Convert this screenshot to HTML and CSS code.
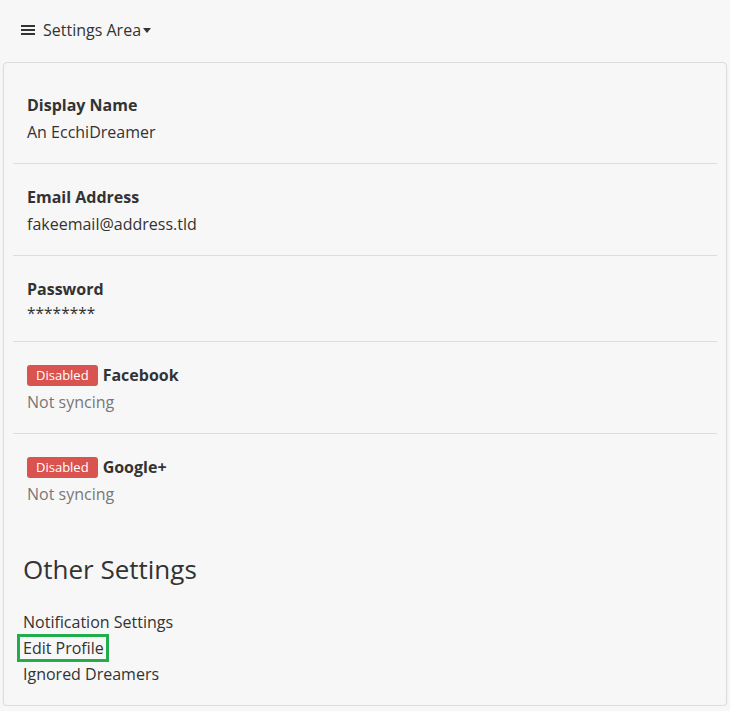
FILE: index.html
```html
<!DOCTYPE html>
<html lang="en">
<head>
  <meta charset="UTF-8">
  <title>Settings Area</title>
  <meta name="viewport" content="width=device-width, initial-scale=1.0">
  <link rel="stylesheet" href="styles.css">
</head>
<body>
  <div class="topbar">
    <a class="menu-toggle" href="#">
      <svg class="burger" width="14" height="10" viewBox="0 0 14 10">
        <rect x="0" y="0" width="14" height="2"/>
        <rect x="0" y="4" width="14" height="2"/>
        <rect x="0" y="8" width="14" height="2"/>
      </svg>
      Settings Area<span class="caret"></span>
    </a>
  </div>

  <div class="panel">
    <ul class="setting-list">
      <li class="setting-item">
        <div class="setting-name">Display Name</div>
        <div class="setting-value">An EcchiDreamer</div>
      </li>
      <li class="setting-item">
        <div class="setting-name">Email Address</div>
        <div class="setting-value">fakeemail@address.tld</div>
      </li>
      <li class="setting-item">
        <div class="setting-name">Password</div>
        <div class="setting-value secret">********</div>
      </li>
      <li class="setting-item">
        <div class="setting-name"><span class="label-danger">Disabled</span> Facebook</div>
        <div class="setting-value muted">Not syncing</div>
      </li>
      <li class="setting-item">
        <div class="setting-name"><span class="label-danger">Disabled</span> Google+</div>
        <div class="setting-value muted">Not syncing</div>
      </li>
    </ul>

    <div class="other-settings">
      <h3>Other Settings</h3>
      <ul class="link-list">
        <li><a href="#">Notification Settings</a></li>
        <li><a href="#" class="highlight">Edit Profile</a></li>
        <li><a href="#">Ignored Dreamers</a></li>
      </ul>
    </div>
  </div>
</body>
</html>
```

FILE: styles.css
```css
body {
  margin: 0;
  background-color: #f7f7f7;
  color: #333;
  font-family: "Open Sans", "Noto Sans", Arial, sans-serif;
  font-size: 16px;
  line-height: 26px;
}

a {
  color: #333;
  text-decoration: none;
}

ul {
  list-style: none;
  margin: 0;
  padding: 0;
}

/* Barre du haut */
.topbar {
  display: flex;
  align-items: center;
  padding: 17px 21px 19px;
}

.menu-toggle {
  display: flex;
  align-items: center;
  font-size: 16px;
  color: #333;
}

.burger {
  fill: #333;
  margin-right: 8px;
}

.caret {
  display: inline-block;
  width: 0;
  height: 0;
  margin-left: 2px;
  border-top: 5px solid #333;
  border-left: 4.5px solid transparent;
  border-right: 4.5px solid transparent;
}

.panel {
  margin: 0 3px;
  padding: 9px 9px 18px;
  background-color: #f7f7f7;
  border: 1px solid #ddd;
  border-radius: 4px;
  box-shadow: 0 1px 2px rgba(0,0,0,0.08);
}

.setting-item {
  padding: 20px 14px 17px;
  border-bottom: 1px solid #ddd;
  line-height: 27px;
}

.setting-item:last-child {
  border-bottom: none;
}

.setting-name {
  font-weight: bold;
  display: flex;
  align-items: center;
  gap: 5px;
}

.setting-value.secret {
  line-height: 21px;
  font-size: 15.5px;
}

.muted {
  color: #777;
}

.label-danger {
  display: inline-block;
  background-color: #d9534f;
  color: #fff;
  font-weight: normal;
  font-size: 13px;
  line-height: 21px;
  padding: 0 9px;
  border-radius: 3px;
}

.other-settings {
  padding: 26px 10px 0;
}

.other-settings h3 {
  font-size: 26px;
  font-weight: normal;
  line-height: 36px;
  margin: 0 0 22px;
}

.highlight {
  display: inline-block;
  margin: -1px 0 -1px -6px;
  padding: 0 2px 0 3px;
  border: 3px solid #1fae4b;
  line-height: 22px;
  vertical-align: top;
}
```
